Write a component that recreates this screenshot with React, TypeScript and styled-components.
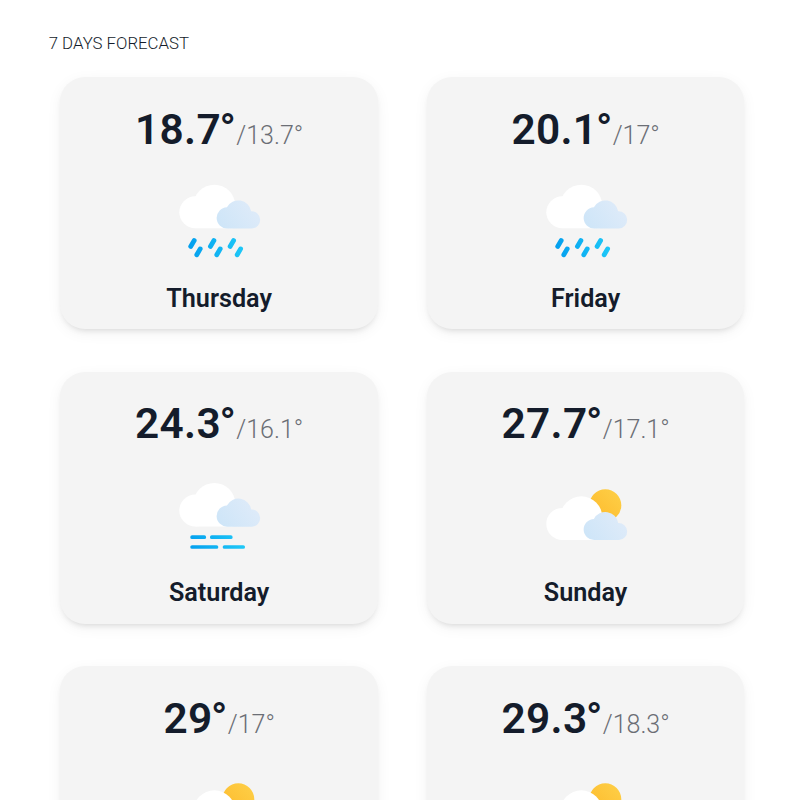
import React from "react";
import styled, { createGlobalStyle } from "styled-components";

const GlobalStyle = createGlobalStyle`
  body {
    margin: 0;
    background: #fff;
    color: #141c2b;
    font-family: Roboto, sans-serif;
  }
`;

const Page = styled.main`
  height: 800px;
  overflow: hidden;
  box-sizing: border-box;
  padding: 33px 48.7px 0;
`;

const Title = styled.h1`
  margin: 0 0 24px;
  font-size: 16.8px;
  line-height: 20px;
  font-weight: 300;
  text-transform: uppercase;
`;

const Grid = styled.section`
  display: grid;
  grid-template-columns: 317.7px 317.7px;
  column-gap: 48.8px;
  row-gap: 42.4px;
  padding-left: 11.6px;
`;

const Card = styled.article`
  height: 252.3px;
  box-sizing: border-box;
  padding-top: 27.6px;
  display: flex;
  flex-direction: column;
  align-items: center;
  border-radius: 25px;
  background: #f4f4f4;
  box-shadow: 0 4px 6px -3px rgba(0, 0, 0, 0.13), 0 4px 16px -1px rgba(0, 0, 0, 0.06);
`;

const Temperatures = styled.div`
  display: flex;
  align-items: baseline;
  height: 50px;
  line-height: 50px;
`;

const High = styled.span`
  font-size: 42.4px;
  font-weight: 600;
  letter-spacing: 0.3px;
`;

const Degree = styled.span`
  margin-left: -1.4px;
`;

const Low = styled.span`
  font-size: 25px;
  font-weight: 300;
  color: #6b6e75;
`;

const IconFrame = styled.svg`
  display: block;
  width: 96px;
  height: 96px;
  margin-top: 18.4px;
`;

const Day = styled.h2`
  margin: 14.6px 0 0;
  font-size: 25.2px;
  line-height: 30px;
  font-weight: 600;
`;

type Condition = "rain" | "fog" | "cloudy";

function Clouds({ y }: { y: number }) {
  return (
    <g transform={`translate(0 ${y})`}>
      <g fill="#fff">
        <circle cx="24.3" cy="39.3" r="16" />
        <circle cx="43.3" cy="32.7" r="21" />
        <path d="M24.3 34H62V55.3H24.3Z" />
      </g>
      <path
        fill="url(#mist)"
        d="M56.6 55.5A10.6 10.6 0 0 1 55.9 34.3A13 13 0 0 1 80.2 38.3A8.6 8.6 0 0 1 80.9 55.5Z"
      />
    </g>
  );
}

function WeatherIcon({ condition }: { condition: Condition }) {
  if (condition === "rain") {
    return (
      <IconFrame viewBox="0 0 96 96">
        <Clouds y={0} />
        <path
          d="M23.2 67.6L19.7 73.4M29.2 75.9L25.8 81.8M42.9 67.6L39.4 73.4M49.2 75.9L45.8 81.8M62.6 67.6L59.1 73.4M69.6 75.9L66.2 81.8"
          stroke="url(#water)"
          strokeWidth="4.8"
          strokeLinecap="round"
        />
      </IconFrame>
    );
  }
  if (condition === "fog") {
    return (
      <IconFrame viewBox="0 0 96 96">
        <Clouds y={3.2} />
        <path
          d="M21.1 69.2H33.3M40.8 69.2H59.8M21.1 79H45.5M53.5 79H72.2"
          stroke="url(#water)"
          strokeWidth="3.7"
          strokeLinecap="round"
        />
      </IconFrame>
    );
  }
  return (
    <IconFrame viewBox="0 0 96 96">
      <circle cx="67.3" cy="37.3" r="16" fill="url(#sun)" />
      <Clouds y={16.6} />
    </IconFrame>
  );
}

const Defs = styled.svg`
  display: block;
  width: 0;
  height: 0;
`;

const forecast: { day: string; high: number; low: number; condition: Condition }[] = [
  { day: "Thursday", high: 18.7, low: 13.7, condition: "rain" },
  { day: "Friday", high: 20.1, low: 17, condition: "rain" },
  { day: "Saturday", high: 24.3, low: 16.1, condition: "fog" },
  { day: "Sunday", high: 27.7, low: 17.1, condition: "cloudy" },
  { day: "Monday", high: 29, low: 17, condition: "cloudy" },
  { day: "Tuesday", high: 29.3, low: 18.3, condition: "cloudy" },
];

export default function App() {
  return (
    <>
      <GlobalStyle />
      <Defs>
        <defs>
          <linearGradient id="mist" gradientUnits="userSpaceOnUse" x1="48" y1="56" x2="84" y2="30">
            <stop stopColor="#cde5f8" />
            <stop offset="1" stopColor="#dfebf9" />
          </linearGradient>
          <linearGradient id="water" gradientUnits="userSpaceOnUse" x1="18" y1="78" x2="74" y2="68">
            <stop stopColor="#039fee" />
            <stop offset="1" stopColor="#20caf8" />
          </linearGradient>
          <linearGradient id="sun" x1="0" y1="1" x2="1" y2="0">
            <stop stopColor="#fdb92b" />
            <stop offset="1" stopColor="#fed048" />
          </linearGradient>
        </defs>
      </Defs>
      <Page>
        <Title>7 days forecast</Title>
        <Grid>
          {forecast.map(({ day, high, low, condition }) => (
            <Card key={day}>
              <Temperatures>
                <High>
                  {high}
                  <Degree>°</Degree>
                </High>
                <Low>/{low}°</Low>
              </Temperatures>
              <WeatherIcon condition={condition} />
              <Day>{day}</Day>
            </Card>
          ))}
        </Grid>
      </Page>
    </>
  );
}
